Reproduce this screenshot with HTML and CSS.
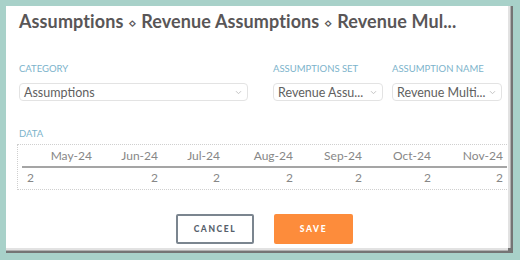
FILE: index.html
```html
<!doctype html>
<html lang="en">
  <head>
    <meta charset="UTF-8" />
    <title>Edit assumption</title>
    <link rel="stylesheet" href="styles.css">
  </head>
  <body>
    <div class="dialog">
      <h1 class="title">Assumptions <span class="sep">⋄</span> Revenue Assumptions <span class="sep">⋄</span> Revenue Mul...</h1>

      <div class="fields">
        <div class="field field-wide">
          <label>Category</label>
          <div class="select">
            <span>Assumptions</span>
            <svg class="chev" width="7" height="5" viewBox="0 0 7 5"><path d="M1 1.2l2.5 2.5 2.5-2.5" /></svg>
          </div>
        </div>
        <div class="field">
          <label>Assumptions Set</label>
          <div class="select">
            <span>Revenue Assu...</span>
            <svg class="chev" width="7" height="5" viewBox="0 0 7 5"><path d="M1 1.2l2.5 2.5 2.5-2.5" /></svg>
          </div>
        </div>
        <div class="field">
          <label>Assumption Name</label>
          <div class="select">
            <span>Revenue Multi...</span>
            <svg class="chev" width="7" height="5" viewBox="0 0 7 5"><path d="M1 1.2l2.5 2.5 2.5-2.5" /></svg>
          </div>
        </div>
      </div>

      <label class="data-label">Data</label>
      <div class="grid-box">
        <table class="grid">
          <colgroup>
            <col style="width: 74px" />
            <col style="width: 66px" />
            <col style="width: 62px" />
            <col style="width: 73px" />
            <col style="width: 69px" />
            <col style="width: 69px" />
            <col style="width: 72px" />
          </colgroup>
          <thead>
            <tr>
              <th>May-24</th>
              <th>Jun-24</th>
              <th>Jul-24</th>
              <th>Aug-24</th>
              <th>Sep-24</th>
              <th>Oct-24</th>
              <th>Nov-24</th>
            </tr>
          </thead>
          <tbody>
            <tr>
              <td class="first">2</td>
              <td>2</td>
              <td>2</td>
              <td>2</td>
              <td>2</td>
              <td>2</td>
              <td>2</td>
            </tr>
          </tbody>
        </table>
      </div>

      <div class="actions">
        <button class="btn btn-cancel">Cancel</button>
        <button class="btn btn-save">Save</button>
      </div>
    </div>
  </body>
</html>
```
FILE: styles.css
```css
* {
  box-sizing: border-box;
  padding: 0;
  margin: 0;
}

body {
  width: 520px;
  height: 260px;
  padding: 6px;
  background: #a8d1c9;
  font-family: Lato, "Liberation Sans", sans-serif;
  overflow: hidden;
}

.dialog {
  width: 502px;
  height: 242px;
  padding: 4px 6px 0 13px;
  background: #fff;
  overflow: hidden;
  box-shadow:
    2px 0 0 #e2e2e2,
    0 2px 0 #e2e2e2,
    3px 0 0 #b0b0b0,
    0 3px 0 #b0b0b0,
    5px 0 0 #747474,
    0 5px 0 #747474,
    5px 5px 0 #747474;
}

.title {
  font-size: 18px;
  font-weight: 700;
  line-height: 22px;
  letter-spacing: 0.1px;
  color: #595657;
  white-space: nowrap;
}

.sep {
  font-family: "DejaVu Sans", sans-serif;
  font-size: 14px;
  font-weight: 400;
}

.fields {
  display: flex;
  margin-top: 29px;
}

.field {
  display: flex;
  flex-direction: column;
  flex: 0 0 110px;
  margin-right: 9px;
}

.field:last-child {
  margin-right: 0;
}

.field-wide {
  flex-basis: 229px;
  margin-right: 25px;
}

label {
  display: block;
  font-size: 9.5px;
  line-height: 12px;
  text-transform: uppercase;
  color: #7cb3cb;
  white-space: nowrap;
}

.select {
  display: flex;
  align-items: center;
  justify-content: space-between;
  height: 18px;
  margin-top: 8px;
  padding: 0 5px 0 4px;
  border: 1px solid #e3e3e3;
  border-radius: 4px;
  font-size: 12.5px;
  color: #606060;
  white-space: nowrap;
}

.chev {
  fill: none;
  stroke: #c4c4c4;
  stroke-width: 1;
}

.data-label {
  margin-top: 27px;
}

.grid-box {
  width: 500px;
  margin-top: 4px;
  margin-left: -2px;
  padding: 0 4px;
  border: 1px dotted #cfcfcf;
}

.grid {
  table-layout: fixed;
  width: 485px;
  border-collapse: collapse;
  font-size: 12px;
  color: #878787;
}

.grid th {
  height: 22px;
  padding: 0 4px 3px 0;
  vertical-align: bottom;
  text-align: right;
  font-weight: 400;
  border-bottom: 2px solid #a5a5a5;
}

.grid td {
  height: 22px;
  padding: 0 4px 2px 0;
  text-align: right;
  line-height: 18px;
}

.grid td.first {
  padding-left: 5px;
  text-align: left;
}

.actions {
  display: flex;
  justify-content: center;
  gap: 20px;
  margin-top: 24px;
  padding-left: 8px;
}

.btn {
  width: 78px;
  height: 30px;
  border-radius: 2px;
  font-family: Lato, "Liberation Sans", sans-serif;
  font-size: 8.5px;
  font-weight: 900;
  letter-spacing: 1.6px;
  text-transform: uppercase;
}

.btn-cancel {
  border: 2px solid #7b858f;
  background: #fff;
  color: #56606b;
}

.btn-save {
  width: 79px;
  border: none;
  background: #fd8c3b;
  color: #fff;
}
```
